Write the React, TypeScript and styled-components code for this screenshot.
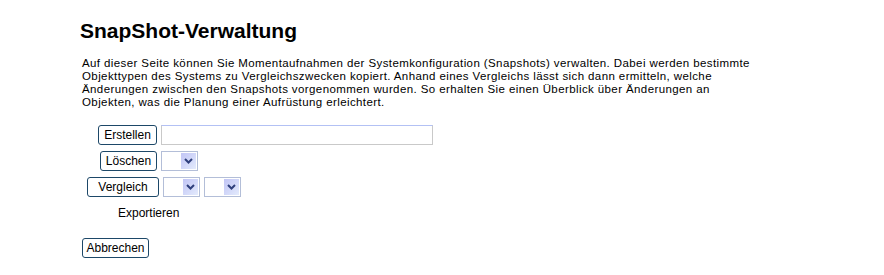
import styled, { createGlobalStyle } from "styled-components";

const GlobalStyle = createGlobalStyle`
  body {
    margin: 0;
    background: #ffffff;
    font-family: "Liberation Sans", Arial, sans-serif;
    color: #000000;
  }
`;

function Chevron(): JSX.Element {
  return (
    <svg width="9" height="6" viewBox="0 0 9 6">
      <path d="M1 1 L4.5 4.5 L8 1" fill="none" stroke="#2f3f7c" strokeWidth="2" />
    </svg>
  );
}

function DropDown(): JSX.Element {
  return (
    <SelectBox>
      <StyledSelect>
        <option></option>
      </StyledSelect>
      <ArrowBox>
        <Chevron />
      </ArrowBox>
    </SelectBox>
  );
}

function App(): JSX.Element {
  return (
    <>
      <GlobalStyle />
      <Page>
        <Title>SnapShot-Verwaltung</Title>
        <Intro>
          Auf dieser Seite können Sie Momentaufnahmen der Systemkonfiguration (Snapshots) verwalten. Dabei werden bestimmte
          <br />
          Objekttypen des Systems zu Vergleichszwecken kopiert. Anhand eines Vergleichs lässt sich dann ermitteln, welche
          <br />
          Änderungen zwischen den Snapshots vorgenommen wurden. So erhalten Sie einen Überblick über Änderungen an
          <br />
          Objekten, was die Planung einer Aufrüstung erleichtert.
        </Intro>

        <Form>
          <Row $indent={16}>
            <Button $w={59}>Erstellen</Button>
            <TextInput type="text" />
          </Row>
          <Row $indent={18}>
            <Button $w={57}>Löschen</Button>
            <DropDown />
          </Row>
          <Row $indent={5}>
            <Button $w={72}>Vergleich</Button>
            <DropDown />
            <DropDown />
          </Row>
          <ExportLabel>Exportieren</ExportLabel>
        </Form>

        <Footer>
          <Button $w={67}>Abbrechen</Button>
        </Footer>
      </Page>
    </>
  );
}

export default App;

const Page = styled.div`
  padding: 19px 0 0 80px;
`;

const Title = styled.h1`
  margin: 0;
  font-size: 21px;
  line-height: 24px;
  font-weight: bold;
`;

const Intro = styled.p`
  margin: 14px 0 0 2px;
  font-size: 11.5px;
  letter-spacing: 0.4px;
  line-height: 13px;
`;

const Form = styled.div`
  display: flex;
  flex-direction: column;
  gap: 6px;
  margin: 16px 0 0 2px;
`;

const Row = styled.div<{ $indent: number }>`
  display: flex;
  align-items: center;
  gap: 4px;
  height: 20px;
  padding-left: ${(p) => p.$indent}px;
`;

const Button = styled.button<{ $w: number }>`
  box-sizing: border-box;
  width: ${(p) => p.$w}px;
  height: 20px;
  margin: 0;
  padding: 0;
  background: #ffffff;
  border: 1px solid #1d4868;
  border-radius: 3px;
  font-family: "Liberation Sans", Arial, sans-serif;
  font-size: 12px;
  color: #000000;
  cursor: pointer;
`;

const TextInput = styled.input`
  box-sizing: border-box;
  width: 272px;
  height: 20px;
  margin: 0;
  border: 1px solid #c9c9c9;
  border-top-color: #b3c1f4;
  background: #ffffff;
`;

const SelectBox = styled.div`
  box-sizing: border-box;
  display: inline-flex;
  align-items: center;
  width: 37px;
  height: 20px;
  padding: 1px;
  border: 1px solid #b3bed8;
  background: #ffffff;
`;

const StyledSelect = styled.select`
  flex: 1;
  min-width: 0;
  height: 100%;
  border: none;
  outline: none;
  background: transparent;
  appearance: none;
  font-size: 11px;
`;

const ArrowBox = styled.span`
  display: flex;
  align-items: center;
  justify-content: center;
  width: 15px;
  height: 16px;
  background: linear-gradient(135deg, #c2c5f5 0%, #d3d9f9 55%, #e4ebfc 100%);
`;

const ExportLabel = styled.div`
  padding-left: 36px;
  margin-top: 3px;
  font-size: 12px;
  line-height: 14px;
  height: 32px;
`;

const Footer = styled.div`
  padding-left: 2px;
`;
